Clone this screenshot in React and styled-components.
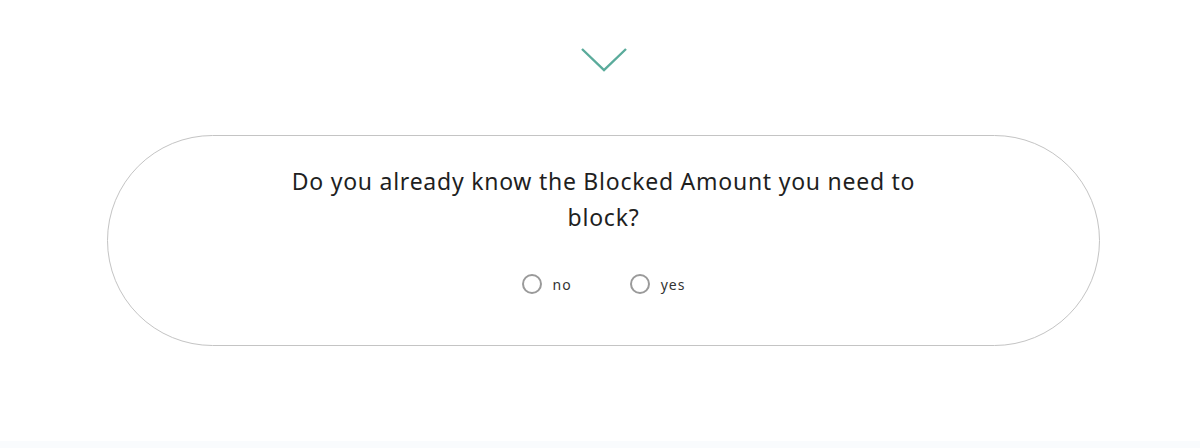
import React from 'react'
import styled, { createGlobalStyle } from 'styled-components'

const GlobalStyle = createGlobalStyle`
  html, body {
    margin: 0;
    padding: 0;
    background: #fff;
  }
  body {
    font-family: 'Noto Sans', 'Open Sans', sans-serif;
    color: #222;
  }
`

const Page = styled.div`
  height: 448px;
  display: flex;
  flex-direction: column;
  align-items: flex-start;
  box-sizing: border-box;
  padding-top: 47px;
  position: relative;
  overflow: hidden;
`

const Chevron = styled.div`
  width: 993px;
  margin-left: 107px;
  display: flex;
  justify-content: center;
  height: 26px;
`

const Pill = styled.div`
  margin-top: 62px;
  margin-left: 107px;
  width: 993px;
  height: 211px;
  box-sizing: border-box;
  border: 1px solid #c4c4c4;
  border-radius: 106px;
  display: flex;
  flex-direction: column;
  align-items: center;
  padding-top: 27px;
`

const Question = styled.h2`
  margin: 0;
  width: 680px;
  text-align: center;
  font-size: 23px;
  font-weight: 400;
  line-height: 36px;
  letter-spacing: 0.75px;
  color: #1f1f1f;
`

const Options = styled.div`
  display: flex;
  gap: 58px;
  margin-top: 39px;
`

const Option = styled.label`
  display: flex;
  align-items: center;
  gap: 11px;
  font-size: 14px;
  letter-spacing: 1px;
  color: #333;
  cursor: pointer;
`

const Radio = styled.span`
  width: 20px;
  height: 20px;
  box-sizing: border-box;
  border: 2px solid #9a9a9a;
  border-radius: 50%;
  background: #fff;
`

const Footer = styled.div`
  position: absolute;
  left: 0;
  right: 0;
  bottom: 0;
  height: 7px;
  background: #f9fbfd;
`

export default function App() {
  return (
    <>
      <GlobalStyle />
      <Page>
        <Chevron>
          <svg width="48" height="26" viewBox="0 0 48 26" fill="none">
            <path d="M2 2 L24 23 L46 2" stroke="#5aab9b" strokeWidth="2.4" />
          </svg>
        </Chevron>
        <Pill>
          <Question>Do you already know the Blocked Amount you need to block?</Question>
          <Options>
            <Option>
              <Radio />
              no
            </Option>
            <Option>
              <Radio />
              yes
            </Option>
          </Options>
        </Pill>
        <Footer />
      </Page>
    </>
  )
}
